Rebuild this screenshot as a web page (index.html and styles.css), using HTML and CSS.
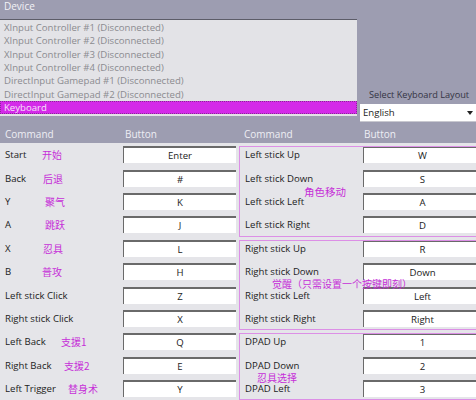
FILE: index.html
```html
<!DOCTYPE html>
<html>
<head>
<meta charset="utf-8">
<link rel="stylesheet" href="styles.css">
</head>
<body>
<div class="top">
  <div class="device">
    <div class="title">Device</div>
    <ul class="listbox">
      <li>XInput Controller #1 (Disconnected)</li>
      <li>XInput Controller #2 (Disconnected)</li>
      <li>XInput Controller #3 (Disconnected)</li>
      <li>XInput Controller #4 (Disconnected)</li>
      <li>DirectInput Gamepad #1 (Disconnected)</li>
      <li>DirectInput Gamepad #2 (Disconnected)</li>
      <li class="selected">Keyboard</li>
    </ul>
  </div>
  <div class="layout">
    <div class="layout-label">Select Keyboard Layout</div>
    <div class="select"><span>English</span><span class="arrow"></span></div>
  </div>
</div>
<div class="grid">
  <div class="col left">
    <div class="head"><span class="h-cmd">Command</span><span>Button</span></div>
    <div class="rows">
      <div class="row"><div class="label"><span class="text">Start</span><span class="note">开始</span></div><div class="key">Enter</div></div>
      <div class="row"><div class="label"><span class="text">Back</span><span class="note n1">后退</span></div><div class="key">#</div></div>
      <div class="row"><div class="label"><span class="text">Y</span><span class="note n3">聚气</span></div><div class="key">K</div></div>
      <div class="row"><div class="label"><span class="text">A</span><span class="note n3">跳跃</span></div><div class="key">J</div></div>
      <div class="row"><div class="label"><span class="text">X</span><span class="note n1">忍具</span></div><div class="key">L</div></div>
      <div class="row"><div class="label"><span class="text">B</span><span class="note">普攻</span></div><div class="key">H</div></div>
      <div class="row"><div class="label"><span class="text">Left stick Click</span></div><div class="key">Z</div></div>
      <div class="row"><div class="label"><span class="text">Right stick Click</span></div><div class="key">X</div></div>
      <div class="row"><div class="label"><span class="text">Left Back</span><span class="note n19">支援1</span></div><div class="key">Q</div></div>
      <div class="row"><div class="label"><span class="text">Right Back</span><span class="note n22">支援2</span></div><div class="key">E</div></div>
      <div class="row"><div class="label"><span class="text">Left Trigger</span><span class="note n26">替身术</span></div><div class="key">Y</div></div>
    </div>
  </div>
  <div class="col right">
    <div class="head"><span class="h-cmd">Command</span><span>Button</span></div>
    <div class="rows">
      <div class="group">
        <div class="row"><div class="label">Left stick Up</div><div class="key">W</div></div>
        <div class="row"><div class="label">Left stick Down</div><div class="key">S</div></div>
        <div class="row"><div class="label">Left stick Left</div><div class="key">A</div></div>
        <div class="row"><div class="label">Left stick Right</div><div class="key">D</div></div>
        <span class="gnote g-move">角色移动</span>
      </div>
      <div class="group">
        <div class="row"><div class="label">Right stick Up</div><div class="key">R</div></div>
        <div class="row"><div class="label">Right stick Down</div><div class="key">Down</div></div>
        <div class="row"><div class="label">Right stick Left</div><div class="key">Left</div></div>
        <div class="row"><div class="label">Right stick Right</div><div class="key">Right</div></div>
        <span class="gnote g-awake">觉醒（只需设置一个按键即刻）</span>
      </div>
      <div class="group">
        <div class="row"><div class="label">DPAD Up</div><div class="key">1</div></div>
        <div class="row"><div class="label">DPAD Down</div><div class="key">2</div></div>
        <div class="row"><div class="label">DPAD Left</div><div class="key">3</div></div>
        <span class="gnote g-tool">忍具选择</span>
      </div>
    </div>
  </div>
</div>
</body>
</html>
```
FILE: styles.css
```css
html, body {
  margin: 0;
  padding: 0;
}
body {
  width: 476px;
  height: 400px;
  overflow: hidden;
  background: #9d9db1;
  font-family: "Open Sans", "Noto Sans CJK SC", sans-serif;
  font-size: 9.6px;
  color: #222;
}
.top {
  display: flex;
  height: 124px;
}
.device {
  width: 357px;
  flex: none;
}
.title {
  height: 19px;
  padding-left: 4px;
  line-height: 13px;
  color: #f3f3f7;
  font-size: 10px;
}
.listbox {
  margin: 0;
  padding: 1px 0 0;
  list-style: none;
  height: 95px;
  background: #e3e3e7;
  border-top: 1px solid #5c5c68;
}
.listbox li {
  height: 13.33px;
  line-height: 13.33px;
  padding-left: 4px;
  color: #8b8b90;
  white-space: nowrap;
}
.listbox .selected {
  background: #d42ae9;
  color: #f7e3fa;
  outline: 1px dotted #8a2a98;
  outline-offset: -1px;
}
.layout {
  flex: 1;
  display: flex;
  flex-direction: column;
  padding-top: 88px;
}
.layout-label {
  height: 14px;
  line-height: 14px;
  padding-left: 12px;
  color: #343444;
  white-space: nowrap;
  font-size: 9.2px;
}
.select {
  margin: 2px 0 0 3px;
  height: 17px;
  background: #fff;
  display: flex;
  align-items: center;
  justify-content: space-between;
  padding-left: 3px;
  color: #222;
  border-bottom: 1px solid #c8c8d0;
}
.arrow {
  width: 0;
  height: 0;
  border-left: 3px solid transparent;
  border-right: 3px solid transparent;
  border-top: 4px solid #222;
  margin-right: 3px;
}
.grid {
  display: grid;
  grid-template-columns: 238px 238px;
}
.head {
  height: 19px;
  display: flex;
  align-items: center;
  color: #eeeef4;
  font-size: 10px;
}
.h-cmd {
  width: 120px;
  padding-left: 5px;
}
.right .h-cmd {
  padding-left: 6px;
}
.rows {
  background: #e5e5e9;
}
.row {
  height: 23.4px;
  display: flex;
  align-items: center;
}
.label {
  width: 123px;
  flex: none;
  box-sizing: border-box;
  padding-left: 5px;
  display: flex;
  align-items: center;
  white-space: nowrap;
  color: #222;
}
.right .label {
  width: 125px;
  padding-left: 7px;
}
.text {
  width: 37px;
  flex: none;
  white-space: nowrap;
}
.note, .gnote {
  font-family: "Noto Sans CJK SC", sans-serif;
  font-size: 10px;
  color: #c62ed8;
  white-space: nowrap;
}
.note.n1 { margin-left: 1px; }
.note.n3 { margin-left: 3px; }
.note.n19 { margin-left: 19px; }
.note.n22 { margin-left: 22px; }
.note.n26 { margin-left: 26px; }
.key {
  width: 113px;
  height: 17px;
  flex: none;
  box-sizing: border-box;
  background: #fff;
  border-top: 2px solid #6a6a6a;
  border-left: 1px solid #6a6a6a;
  display: flex;
  align-items: center;
  justify-content: center;
  color: #222;
}
.right .key {
  width: 118px;
}
.group {
  position: relative;
}
.group::before {
  content: "";
  position: absolute;
  top: 3px;
  bottom: 0;
  left: 1px;
  right: -4px;
  border: 1px solid #dc8fe6;
  pointer-events: none;
}
.gnote {
  position: absolute;
  line-height: 14px;
}
.g-move { left: 66px; top: 42px; font-size: 10.5px; }
.g-awake { left: 34px; top: 40px; }
.g-tool { left: 19px; top: 41px; }
```
